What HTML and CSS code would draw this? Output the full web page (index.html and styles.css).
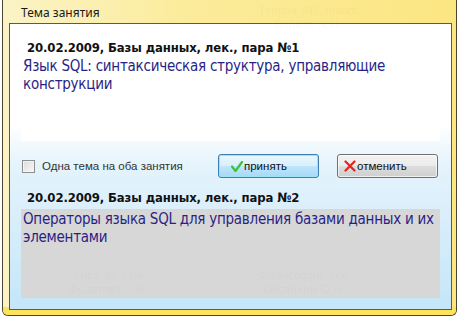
FILE: index.html
```html
<!DOCTYPE html>
<html lang="ru">
<head>
<meta charset="utf-8">
<link rel="stylesheet" href="styles.css">
</head>
<body>
<div class="window">
  <div class="ghosts">
    <span class="ghost g1">Теория ЯП, практ.<br>Бойков А.Н.</span>
    <span class="ghost g2">Англ. яз. сем.<br>Филатова С.В.</span>
    <span class="ghost g3">Философия, лек.<br>Овсянкин О.А.</span>
  </div>
  <div class="title">Тема занятия</div>
  <div class="client">
    <div class="box box-white">
      <div class="head">20.02.2009, Базы данных, лек., пара №1</div>
      <div class="topic">Язык SQL: синтаксическая структура, управляющие конструкции</div>
    </div>
    <div class="actions">
      <label class="check"><span class="checkbox"></span>Одна тема на оба занятия</label>
      <button class="btn btn-default">
        <svg width="12" height="11" viewBox="0 0 12 11"><path d="M1 5.5 L4.5 10 L11 1" fill="none" stroke="#3cc23c" stroke-width="2.2" stroke-linejoin="round" stroke-linecap="round"/></svg>
        принять
      </button>
      <button class="btn btn-last">
        <svg width="12" height="12" viewBox="0 0 12 12"><path d="M1.5 1.5 L10.5 10.5 M10.5 1.5 L1.5 10.5" fill="none" stroke="#e8221c" stroke-width="2.2" stroke-linecap="round"/></svg>
        отменить
      </button>
    </div>
    <div class="head head2">20.02.2009, Базы данных, лек., пара №2</div>
    <div class="box box-gray">
      <div class="topic">Операторы языка SQL для управления базами данных и их элементами</div>
    </div>
  </div>
</div>
</body>
</html>
```
FILE: styles.css
```css
html, body {
  margin: 0;
  padding: 0;
  background: #ffffff;
}
body {
  width: 459px;
  height: 317px;
  overflow: hidden;
}
.window {
  position: relative;
  margin-left: 2px;
  width: 455px;
  height: 316px;
  box-sizing: border-box;
  border: 1px solid #4a4630;
  border-top: none;
  border-radius: 0 0 6px 6px;
  background: linear-gradient(90deg, #fbf3c6 0%, #fbec9c 40%, #fce682 100%);
  padding: 0 4px 6px 6px;
  display: flex;
  flex-direction: column;
}
.window::after {
  content: "";
  position: absolute;
  left: 0; right: 0; bottom: 0;
  height: 8px;
  border-radius: 0 0 5px 5px;
  background: #fde35a;
}
.ghosts {
  position: absolute;
  inset: 0;
  z-index: 3;
  pointer-events: none;
}
.ghost {
  position: absolute;
  font: 13px "Liberation Serif", serif;
  text-align: center;
  color: rgba(120, 100, 40, 0.05);
  line-height: 14px;
}
.g1 { left: 255px; top: 3px; }
.g2 { left: 65px; top: 268px; }
.g3 { left: 255px; top: 268px; }
.title {
  height: 23px;
  box-sizing: border-box;
  padding: 4px 0 0 12px;
  font: 12px "Noto Sans", "DejaVu Sans", sans-serif;
  color: #1a1a1a;
  flex: none;
}
.client {
  position: relative;
  z-index: 2;
  flex: 1;
  border: 1px solid #5c5a4c;
  background: linear-gradient(180deg, #ffffff 0%, #ffffff 35%, #e4f3fc 50%, #c4e6f8 100%);
  padding: 5px 11px 11px 11px;
  display: flex;
  flex-direction: column;
}
.box {
  width: 419px;
  box-sizing: border-box;
}
.box-white {
  background: #ffffff;
  height: 112px;
  padding: 11px 0 0 2px;
}
.head {
  font: bold 13px "DejaVu Sans Condensed", "DejaVu Sans", sans-serif;
  letter-spacing: -0.12px;
  color: #111;
  padding-left: 4px;
  line-height: 16px;
}
.topic {
  font: 15px "DejaVu Sans Condensed", "DejaVu Sans", sans-serif;
  letter-spacing: -0.25px;
  color: #2a1f86;
  line-height: 18px;
  margin-top: 1px;
}
.actions {
  display: flex;
  align-items: center;
  height: 24px;
  margin-top: 13px;
}
.check {
  flex: none;
  display: flex;
  align-items: center;
  font: 11.5px "Liberation Sans", Arial, sans-serif;
  color: #333;
  width: 197px;
  padding-left: 1px;
  box-sizing: border-box;
}
.checkbox {
  flex: none;
  width: 11px;
  height: 11px;
  border: 1px solid #8e8f8f;
  background: linear-gradient(135deg, #dcdcdc, #f8f8f8);
  margin-right: 7px;
  box-shadow: inset 0 0 0 1px #f4f4f4;
}
.btn {
  flex: none;
  width: 101px;
  height: 24px;
  margin: 0 18px 0 0;
  border: 1px solid #707070;
  border-radius: 3px;
  background: linear-gradient(180deg, #f2f2f2 0%, #ebebeb 50%, #dddddd 51%, #cfcfcf 100%);
  font: 11.5px "Liberation Sans", Arial, sans-serif;
  color: #111;
  display: flex;
  align-items: center;
  padding: 0 0 0 6px;
  gap: 1px;
  box-shadow: inset 0 0 0 1px rgba(255,255,255,0.7);
}
.btn-last {
  margin-right: 0;
}
.btn-default {
  border-color: #3c7fb1;
  padding-left: 12px;
  background: linear-gradient(180deg, #eaf6fd 0%, #d9f0fc 50%, #bee6fd 51%, #a7d9f5 100%);
  box-shadow: inset 0 0 0 1px #9fe3f8;
}
.head2 {
  margin-top: 12px;
  padding-left: 6px;
}
.box-gray {
  background: #d7d7d7;
  height: 89px;
  margin-top: 3px;
  padding: 1px 0 0 2px;
}
.box-gray .topic {
  margin-top: 0;
}
```
